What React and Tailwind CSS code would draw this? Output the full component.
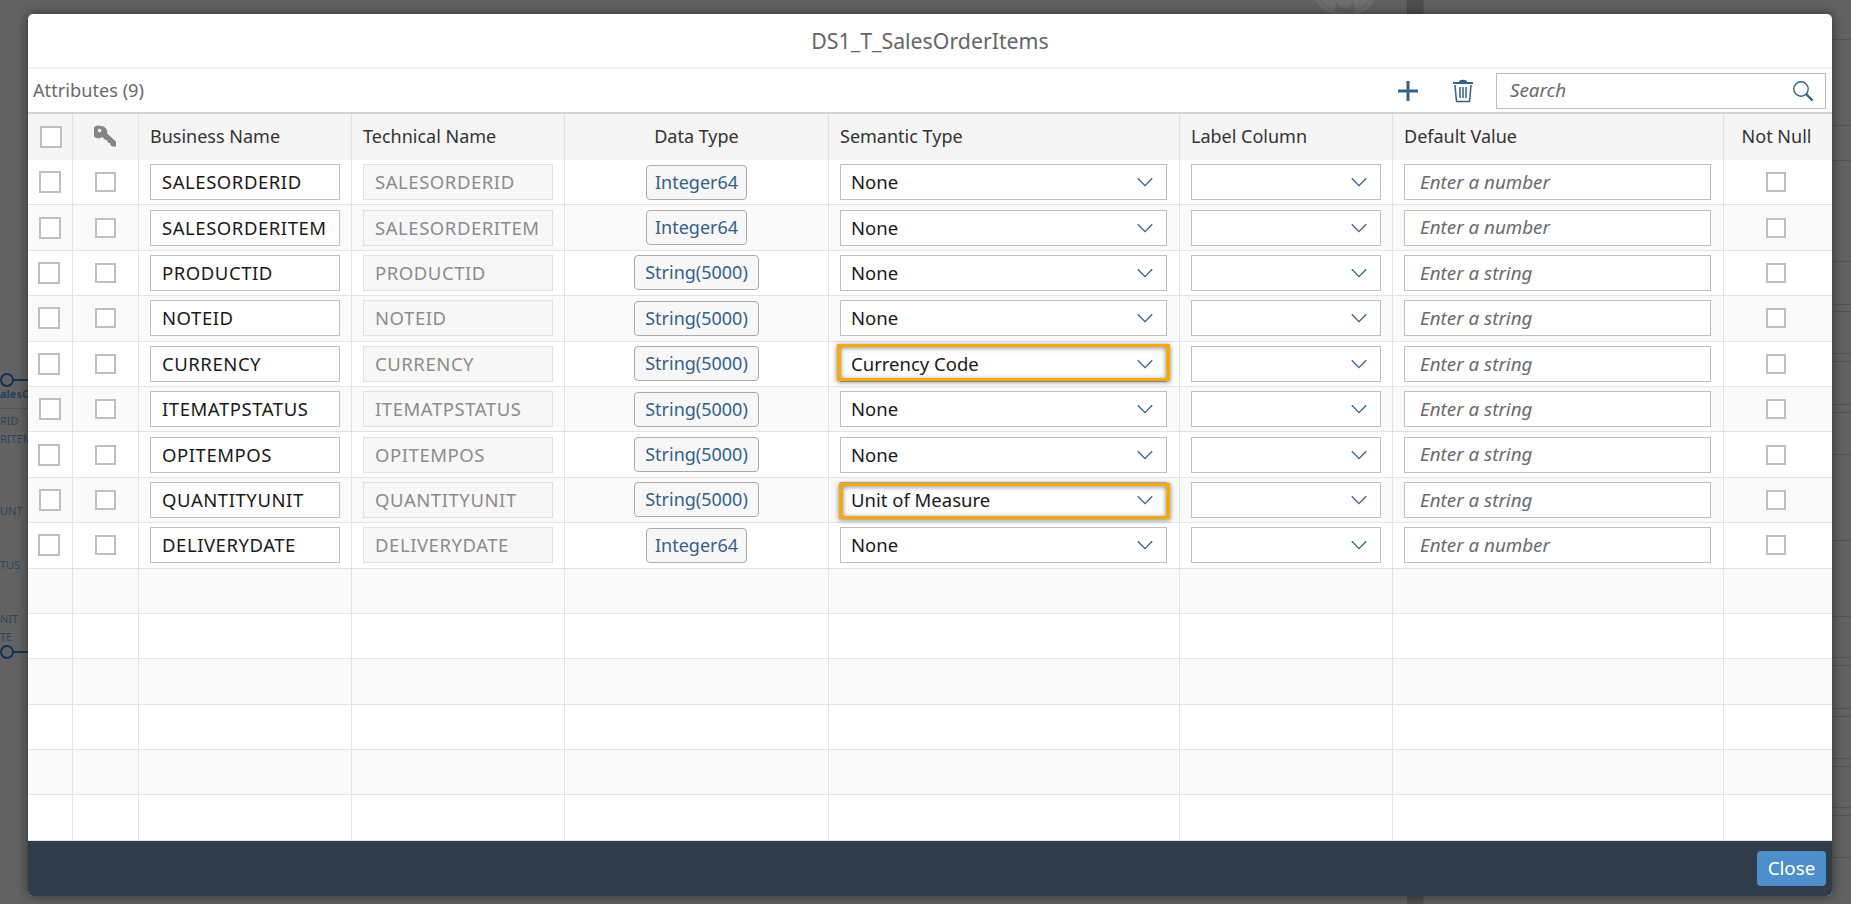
const COLS = 'grid grid-cols-[45px_66px_213px_213px_264px_351px_213px_331px_108px]';
const CELL = 'flex items-center border-r border-[#e3e3e3] last:border-r-0';
const FONT = { fontFamily: '"Noto Sans", sans-serif' };

const rows = [
  { name: 'SALESORDERID', type: 'Integer64', semantic: 'None', hint: 'Enter a number', boxLeft: 'ml-[11px]' },
  { name: 'SALESORDERITEM', type: 'Integer64', semantic: 'None', hint: 'Enter a number', boxLeft: 'ml-[11px]' },
  { name: 'PRODUCTID', type: 'String(5000)', semantic: 'None', hint: 'Enter a string', boxLeft: 'ml-[10px]' },
  { name: 'NOTEID', type: 'String(5000)', semantic: 'None', hint: 'Enter a string', boxLeft: 'ml-[10px]' },
  { name: 'CURRENCY', type: 'String(5000)', semantic: 'Currency Code', hint: 'Enter a string', boxLeft: 'ml-[10px]', mark: 'left-[-4px] right-[-4px] top-[-3px] bottom-0' },
  { name: 'ITEMATPSTATUS', type: 'String(5000)', semantic: 'None', hint: 'Enter a string', boxLeft: 'ml-[11px]' },
  { name: 'OPITEMPOS', type: 'String(5000)', semantic: 'None', hint: 'Enter a string', boxLeft: 'ml-[10px]' },
  { name: 'QUANTITYUNIT', type: 'String(5000)', semantic: 'Unit of Measure', hint: 'Enter a string', boxLeft: 'ml-[11px]', mark: 'left-[-2px] right-[-4px] top-0 bottom-[-2px]' },
  { name: 'DELIVERYDATE', type: 'Integer64', semantic: 'None', hint: 'Enter a number', boxLeft: 'ml-[10px]' },
];

const sideLines = [39, 125, 160, 261, 304, 311, 353, 361, 404, 412, 454, 540, 616, 657, 665, 708, 716, 758, 766, 807, 815, 857];

const nodeLabels = [
  { text: 'RID', top: 'top-[413px]' },
  { text: 'RITEM', top: 'top-[431px]' },
  { text: 'UNT', top: 'top-[503px]' },
  { text: 'TUS', top: 'top-[557px]' },
  { text: 'NIT', top: 'top-[611px]' },
  { text: 'TE', top: 'top-[629px]' },
];

const Chevron = () => (
  <svg width="16" height="10" viewBox="0 0 16 10" fill="none" stroke="#346187" strokeWidth="1.3" className="shrink-0">
    <path d="M0.8 1.2 L8 8.6 L15.2 1.2" />
  </svg>
);

const KeyIcon = () => (
  <svg width="23" height="23" viewBox="0 0 23 23" fill="#858585">
    <path fillRule="evenodd" d="M7 1a6.4 6.4 0 0 1 6.2 7.6l8.8 8.2v4.6h-4.2l-1.5-1.6v-1.8h-1.8l-1-1v-1.7h-1.8L8.4 12A6.4 6.4 0 1 1 7 1zM5.6 3.8a1.8 1.8 0 1 0 0 3.6 1.8 1.8 0 0 0 0-3.6z" />
  </svg>
);

const TrashIcon = () => (
  <svg width="22" height="24" viewBox="0 0 22 24" fill="none" stroke="#346187" strokeWidth="1.5">
    <path d="M1 4 H21" strokeWidth="2" />
    <path d="M8 3 C8 1.4 14 1.4 14 3" strokeWidth="2" />
    <path d="M3 6 L4.5 22.5 H17.5 L19 6" />
    <path d="M8 8 V19 M11 8 V19 M14 8 V19" />
  </svg>
);

const SearchIcon = () => (
  <svg width="22" height="22" viewBox="0 0 22 22" fill="none" stroke="#346187">
    <circle cx="9" cy="9" r="7.2" strokeWidth="1.4" />
    <path d="M14.2 14.2 L20.5 20.5" strokeWidth="2.4" />
  </svg>
);

const Check = ({ className }) => (
  <div className={`border-2 border-[#bfbfbf] bg-white shrink-0 ${className}`} />
);

const SelectBox = ({ value, width, mark }) => (
  <div className={`relative flex items-center justify-between ml-[11px] h-[36px] pl-[10px] pr-[13px] bg-white border border-[#bfbfbf] text-[18.5px] text-[#1a1a1a] ${width}`}>
    <span>{value}</span>
    <Chevron />
    {mark && (
      <div className={`absolute border-x-[4px] border-y-[3px] border-[#f5a90c] shadow-[0_1px_5px_rgba(0,0,0,0.5),inset_0_1px_5px_rgba(0,0,0,0.45)] ${mark}`} />
    )}
  </div>
);

const Backdrop = () => (
  <div className="absolute inset-0 overflow-hidden bg-[#626262]">
    {/* diagram left behind the dialog */}
    <div className="absolute left-0 top-[373px] w-[14px] h-[14px] rounded-full border-2 border-[#12324f]" />
    <div className="absolute left-[14px] top-[379px] w-[14px] h-[2px] bg-[#12324f]" />
    <div className="absolute left-0 top-[645px] w-[14px] h-[14px] rounded-full border-2 border-[#12324f]" />
    <div className="absolute left-[14px] top-[651px] w-[14px] h-[2px] bg-[#12324f]" />
    <div className="absolute left-0 top-[386px] whitespace-nowrap text-[11px] leading-[16px] font-bold text-[#26415a]">alesO</div>
    <div className="absolute left-0 top-[408px] w-[28px] h-px bg-[#4a5560]" />
    {nodeLabels.map((l) => (
      <div key={l.text} className={`absolute left-0 whitespace-nowrap text-[11px] leading-[16px] text-[#2f4559] ${l.top}`}>
        {l.text}
      </div>
    ))}

    {/* splitter and logo, top and bottom */}
    <div className="absolute left-[1407px] top-0 bottom-0 w-[16px] bg-[#4f4f4f]" />
    <div className="absolute left-[1423px] top-0 bottom-0 w-[1px] bg-[#585858]" />
    <svg className="absolute left-[1308px] top-[-38px]" width="74" height="56" viewBox="0 0 74 56" fill="none">
      <circle cx="37" cy="20" r="33" stroke="#6d6d6d" strokeWidth="4" />
      <circle cx="37" cy="38" r="8" fill="#6f6f6f" />
      <path d="M12 38 L26 50 L30 36 Z M62 38 L48 50 L44 36 Z" fill="#6f6f6f" />
    </svg>

    {/* list rows on the right */}
    {sideLines.map((y) => (
      <div key={y} className="absolute right-0 w-[18px] h-px bg-[#525252]" style={{ top: y }} />
    ))}
  </div>
);

export default function App() {
  return (
    <div className="relative w-[1851px] h-[904px] overflow-hidden" style={FONT}>
      <Backdrop />

      <div className="relative ml-[28px] top-[14px] w-[1804px] h-[882px] flex flex-col rounded-[5px] overflow-hidden bg-white shadow-[0_0_12px_rgba(0,0,0,0.5)]">
        {/* Title */}
        <div className="h-[55px] shrink-0 flex items-center justify-center border-b-2 border-[#f2f2f2] text-[21.3px] text-[#666666]">
          DS1_T_SalesOrderItems
        </div>

        {/* Toolbar */}
        <div className="h-[43px] shrink-0 flex items-center pl-[5px] pr-[6px]">
          <span className="text-[18.2px] text-[#6a6a6a]">Attributes (9)</span>
          <div className="ml-auto flex items-center">
            <svg width="20" height="20" viewBox="0 0 20 20" fill="none" stroke="#346187" strokeWidth="3">
              <path d="M10 0 V20 M0 10 H20" />
            </svg>
            <div className="ml-[34px] mr-[22px] flex">
              <TrashIcon />
            </div>
            <div className="flex items-center justify-between w-[330px] h-[36px] pl-[13px] pr-[11px] border border-[#bfbfbf] italic text-[18.8px] text-[#6b6b6b]">
              <span>Search</span>
              <SearchIcon />
            </div>
          </div>
        </div>

        {/* Table */}
        <div className="flex-1 flex flex-col border-t-2 border-[#d4d4d4]">
          <div className={`${COLS} h-[46px] shrink-0 bg-[#f5f5f5] text-[18px] text-[#333333]`}>
            <div className={`${CELL} pl-[12px]`}><Check className="w-[22px] h-[22px]" /></div>
            <div className={`${CELL} justify-center pb-[2px]`}><KeyIcon /></div>
            <div className={`${CELL} pl-[11px] pb-[2px]`}>Business Name</div>
            <div className={`${CELL} pl-[11px] pb-[2px]`}>Technical Name</div>
            <div className={`${CELL} justify-center pb-[2px]`}>Data Type</div>
            <div className={`${CELL} pl-[11px] pb-[2px]`}>Semantic Type</div>
            <div className={`${CELL} pl-[11px] pb-[2px]`}>Label Column</div>
            <div className={`${CELL} pl-[11px] pb-[2px]`}>Default Value</div>
            <div className={`${CELL} justify-center pb-[2px] pr-[3px]`}>Not Null</div>
          </div>

          {rows.map((r, i) => (
            <div key={r.name} className={`${COLS} h-[45.4px] shrink-0 border-b border-[#e3e3e3] ${i % 2 ? 'bg-[#fafafa]' : 'bg-white'}`}>
              <div className={CELL}><Check className={`w-[22px] h-[22px] ${r.boxLeft}`} /></div>
              <div className={`${CELL} justify-center`}><Check className="w-[21px] h-[20px]" /></div>
              <div className={CELL}>
                <div className="ml-[11px] w-[190px] h-[36px] flex items-center pl-[11px] bg-white border border-[#bfbfbf] text-[18.5px] tracking-[0.55px] text-[#1a1a1a] whitespace-nowrap">{r.name}</div>
              </div>
              <div className={CELL}>
                <div className="ml-[11px] w-[190px] h-[36px] flex items-center pl-[11px] bg-[#f7f7f7] border border-[#e0e0e0] text-[18.5px] tracking-[0.55px] text-[#8c8c8c] whitespace-nowrap">{r.name}</div>
              </div>
              <div className={`${CELL} justify-center`}>
                <div className={`h-[35px] flex items-center justify-center rounded-[4px] bg-[#f7f7f7] border border-[#ababab] text-[18px] text-[#346187] ${r.type === 'Integer64' ? 'w-[101px]' : 'w-[125px]'}`}>{r.type}</div>
              </div>
              <div className={CELL}><SelectBox value={r.semantic} width="w-[327px]" mark={r.mark} /></div>
              <div className={CELL}><SelectBox width="w-[190px]" /></div>
              <div className={CELL}>
                <div className="ml-[11px] w-[307px] h-[36px] flex items-center pl-[15px] bg-white border border-[#bfbfbf] italic text-[18.8px] text-[#6b6b6b]">{r.hint}</div>
              </div>
              <div className={`${CELL} justify-center`}><Check className="w-[20px] h-[20px] mr-[4px]" /></div>
            </div>
          ))}

          {Array.from({ length: 6 }, (_, i) => (
            <div key={i} className={`${COLS} h-[45.4px] shrink-0 border-b border-[#e3e3e3] ${i % 2 ? 'bg-white' : 'bg-[#fafafa]'}`}>
              {Array.from({ length: 9 }, (_, c) => (
                <div key={c} className={CELL} />
              ))}
            </div>
          ))}
        </div>

        {/* Footer */}
        <div className="h-[55px] shrink-0 flex items-center justify-end pr-[6px] bg-[#303c49]">
          <div className="w-[69px] h-[35px] flex items-center justify-center rounded-[4px] bg-[#4d8fcb] text-[18.8px] text-white">Close</div>
        </div>
      </div>
    </div>
  );
}
